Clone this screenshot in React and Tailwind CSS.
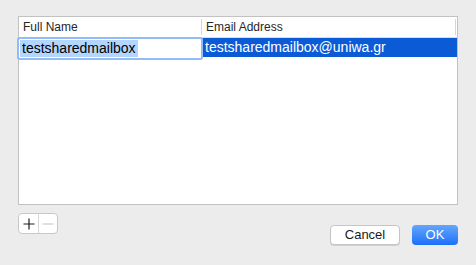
export default function App() {
  return (
    <div
      className="w-[476px] h-[265px] bg-[#ececec] pt-[16px] px-[18px] text-black"
      style={{ fontFamily: '"Liberation Sans", Arial, sans-serif' }}
    >
      {/* table */}
      <div className="h-[189px] w-[440px] border border-[#c2c2c2] bg-white">
        <div className="flex h-[21px] border-b border-[#dcdcdc] text-[12px] text-[#262626]">
          <div className="relative flex w-[183px] items-center pl-[4px]">
            Full Name
            <span className="absolute right-0 top-[2px] h-[16px] w-px bg-[#d6d6d6]" />
          </div>
          <div className="relative flex flex-1 items-center pl-[4px]">
            Email Address
            <span className="absolute right-[1px] top-[2px] h-[16px] w-px bg-[#d6d6d6]" />
          </div>
        </div>
        <div className="flex h-[19px] bg-[#0b5bd7] text-[14px] leading-[19px]">
          <div className="relative w-[183px]">
            <div className="absolute left-0 top-[1px] h-[19px] w-[182px] bg-white shadow-[0_0_0_2px_#93bcf5] rounded-[1px]">
              <span className="ml-[1px] inline-block bg-[#b4d5fe] pl-[2px] pr-[2px] leading-[17px]">
                testsharedmailbox
              </span>
            </div>
          </div>
          <div className="flex-1 pl-[3px] text-white">testsharedmailbox@uniwa.gr</div>
        </div>
      </div>

      {/* bottom controls */}
      <div className="mt-[8px] flex justify-between">
        <div className="flex h-[21px] w-[40px] overflow-hidden rounded-[4px] border border-[#c8c8c8] bg-white">
          <div className="flex w-[20px] items-center justify-center border-r border-[#d8d8d8]">
            <svg width="12" height="12" viewBox="0 0 12 12">
              <path d="M6 0.5V11.5M0.5 6H11.5" stroke="#1a1a1a" strokeWidth="1.2" />
            </svg>
          </div>
          <div className="flex flex-1 items-center justify-center">
            <svg width="12" height="12" viewBox="0 0 12 12">
              <path d="M0.5 6H11.5" stroke="#c4c4c4" strokeWidth="1.2" />
            </svg>
          </div>
        </div>
        <div className="mt-[12px] flex gap-[12px]">
          <button className="h-[20px] w-[70px] rounded-[4px] border border-[#c5c5c5] bg-white text-[13px] leading-[18px] text-[#1a1a1a] shadow-[0_1px_0_#d0d0d0]">
            Cancel
          </button>
          <button className="h-[20px] w-[46px] rounded-[4px] bg-gradient-to-b from-[#64a6fb] to-[#1a6ff8] text-[13px] leading-[20px] text-white">
            OK
          </button>
        </div>
      </div>
    </div>
  );
}
